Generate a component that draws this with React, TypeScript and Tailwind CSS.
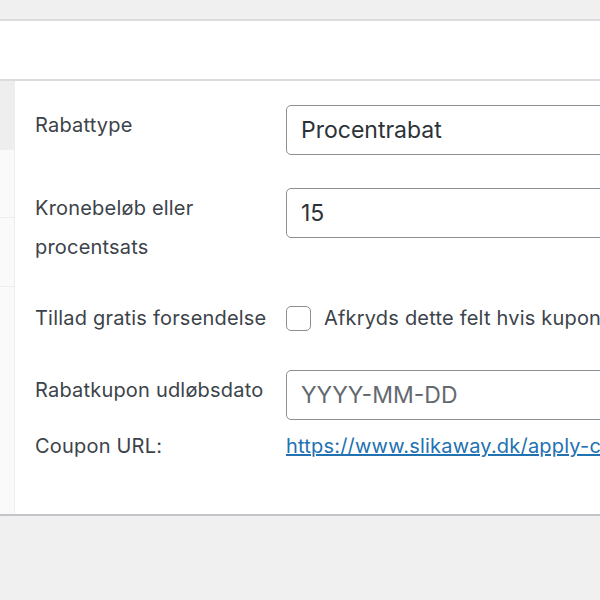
const font = { fontFamily: 'Inter, "Liberation Sans", sans-serif' };

export default function App() {
  return (
    <div className="w-[600px] h-[600px] overflow-hidden bg-[#f0f0f1] text-[#3c434a]" style={font}>
      {/* top strip */}
      <div className="h-[19px] bg-[#f0f0f1]" />
      <div className="h-[62px] bg-white border-y-2 border-[#dcdcde]" />

      {/* coupon data panel */}
      <div className="flex bg-white border-b-2 border-[#c3c4c7]">
        {/* tabs */}
        <div className="w-[15px] shrink-0 bg-[#fafafa] border-r border-[#eeeeee]">
          <div className="h-[69px] bg-[#eeeeee] border-b border-[#eeeeee]" />
          <div className="h-[68px] border-b border-[#eeeeee]" />
          <div className="h-[69px] border-b border-[#eeeeee]" />
        </div>

        {/* fields */}
        <div className="flex-1 min-w-0 overflow-hidden pt-[24px] pb-[48px] pl-[20px] text-[20px] leading-[39px] tracking-[0.2px]">
          <div className="flex items-start mb-[33px]">
            <label className="w-[251px] shrink-0 mt-[1px]">Rabattype</label>
            <div className="h-[50px] w-[400px] shrink-0 border-[1.5px] border-[#8c8f94] rounded-[5px] flex items-center pl-[14px] text-[23px] tracking-normal text-[#2c3338]">
              Procentrabat
            </div>
          </div>

          <div className="flex items-start mb-[32px]">
            <label className="w-[251px] shrink-0 mt-[1px]">
              Kronebeløb eller
              <br />
              procentsats
            </label>
            <div className="h-[50px] w-[400px] shrink-0 border-[1.5px] border-[#8c8f94] rounded-[5px] flex items-center pl-[14px] text-[23px] tracking-normal text-[#2c3338]">
              15
            </div>
          </div>

          <div className="flex items-start mb-[32px]">
            <label className="w-[251px] shrink-0">Tillad gratis forsendelse</label>
            <div className="flex items-center h-[39px] whitespace-nowrap">
              <span className="w-[25px] h-[25px] shrink-0 border-[1.5px] border-[#8c8f94] rounded-[5px] bg-white" />
              <span className="ml-[13px]">Afkryds dette felt hvis kuponen giver gratis forsendelse</span>
            </div>
          </div>

          <div className="flex items-start mb-[7px]">
            <label className="w-[251px] shrink-0 mt-[1px]">Rabatkupon udløbsdato</label>
            <div className="h-[50px] w-[400px] shrink-0 border-[1.5px] border-[#8c8f94] rounded-[5px] flex items-center pl-[14px] text-[23px] tracking-normal text-[#646970]">
              YYYY-MM-DD
            </div>
          </div>

          <div className="flex items-start">
            <label className="w-[251px] shrink-0">Coupon URL:</label>
            <a href="#" className="whitespace-nowrap text-[#2271b1] underline">
              https://www.slikaway.dk/apply-coupon/15procent
            </a>
          </div>
        </div>
      </div>
    </div>
  );
}
